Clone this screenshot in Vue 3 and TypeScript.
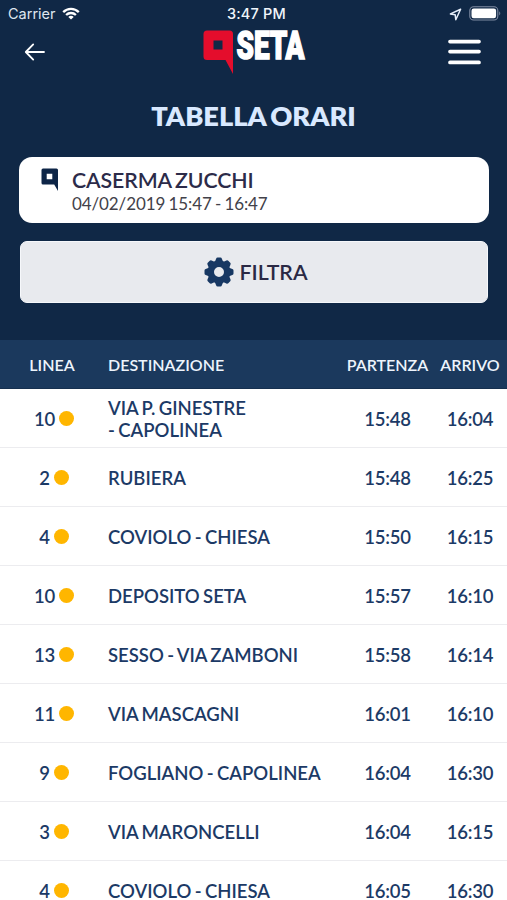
<script setup lang="ts">
interface Departure {
  line: number
  destination: string[]
  departure: string
  arrival: string
}

const departures: Departure[] = [
  { line: 10, destination: ['VIA P. GINESTRE', '- CAPOLINEA'], departure: '15:48', arrival: '16:04' },
  { line: 2, destination: ['RUBIERA'], departure: '15:48', arrival: '16:25' },
  { line: 4, destination: ['COVIOLO - CHIESA'], departure: '15:50', arrival: '16:15' },
  { line: 10, destination: ['DEPOSITO SETA'], departure: '15:57', arrival: '16:10' },
  { line: 13, destination: ['SESSO - VIA ZAMBONI'], departure: '15:58', arrival: '16:14' },
  { line: 11, destination: ['VIA MASCAGNI'], departure: '16:01', arrival: '16:10' },
  { line: 9, destination: ['FOGLIANO - CAPOLINEA'], departure: '16:04', arrival: '16:30' },
  { line: 3, destination: ['VIA MARONCELLI'], departure: '16:04', arrival: '16:15' },
  { line: 4, destination: ['COVIOLO - CHIESA'], departure: '16:05', arrival: '16:30' },
]

const teeth = [0, 45, 90, 135, 180, 225, 270, 315]
</script>

<template>
  <div class="screen">
    <div class="status">
      <div class="carrier">
        <span>Carrier</span>
        <svg width="18" height="13" viewBox="0 0 18 13" fill="none" stroke="#fff" stroke-width="2.3">
          <path d="M1.2 5.1C5.6.7 12.4.7 16.8 5.1" />
          <path d="M4.1 8c2.8-2.7 7-2.7 9.8 0" />
          <path d="M9 12.6 6.3 9.9c1.5-1.4 3.9-1.4 5.4 0z" fill="#fff" stroke="none" />
        </svg>
      </div>
      <span class="clock">3:47 PM</span>
      <div class="indicators">
        <svg width="13" height="13" viewBox="0 0 13 13" fill="none" stroke="#e6eefa" stroke-width="1.5" stroke-linejoin="round">
          <path d="M11.6 1.3 1.4 5.9l4.8.9 .6 4.9z" />
        </svg>
        <svg class="battery" width="33" height="15" viewBox="0 0 33 15">
          <rect x=".8" y=".8" width="28" height="13.2" rx="3.8" fill="none" stroke="#7f8ba2" stroke-width="1.1" />
          <rect x="2.5" y="2.5" width="24.6" height="9.8" rx="2.2" fill="#fff" />
          <path d="M30.3 5.3q1.9 2.1 0 4.2z" fill="#8591a7" />
        </svg>
      </div>
    </div>

    <nav class="nav">
      <svg class="back" width="22" height="18" viewBox="0 0 22 18" fill="none" stroke="#fff" stroke-width="1.8" stroke-linecap="round" stroke-linejoin="round">
        <path d="M20 9H2M9.2 1.4 1.8 9l7.4 7.600" />
      </svg>
      <svg class="logo" width="104" height="46" viewBox="0 0 104 46">
        <path fill="#e40d2c" fill-rule="evenodd" d="M4 1.500H26.500Q30 1.500 30 5V45L22.500 31H4Q.5 31 .5 27.500V5Q.5 1.500 4 1.500zM10.500 11.500V20.500H19.500V11.500z" />
        <text x="33.500" y="30" textLength="68" lengthAdjust="spacingAndGlyphs">SETA</text>
      </svg>
      <svg class="menu" width="33" height="26" viewBox="0 0 33 26" stroke="#fff" stroke-width="3.7" stroke-linecap="round">
        <path d="M2 2.600H31M2 12.600H31M2 23.400H31" />
      </svg>
    </nav>

    <h1 class="title">TABELLA ORARI</h1>

    <section class="stop">
      <svg width="18" height="24" viewBox="0 0 18 24">
        <path fill="#0d2547" fill-rule="evenodd" d="M2 .500H15.500Q17 .500 17 2V23L13.200 16.500H2Q.5 16.500 .5 15V2Q.5 .500 2 .500zM5.700 5.700V11.300H11.300V5.700z" />
      </svg>
      <div>
        <div class="stop-name">CASERMA ZUCCHI</div>
        <div class="stop-time">04/02/2019 15:47 - 16:47</div>
      </div>
    </section>

    <button class="filter" type="button">
      <svg width="30" height="30" viewBox="-15 -15 30 30" fill="#173863">
        <path v-for="angle in teeth" :key="angle" d="M-4.400-9.500 -2.900-13.300Q-2.500-14.500-1.400-14.500H1.400Q2.500-14.500 2.900-13.300L4.400-9.500z" :transform="`rotate(${angle})`" />
        <circle r="8.200" fill="none" stroke="#173863" stroke-width="6.400" />
      </svg>
      <span>FILTRA</span>
    </button>

    <div class="row head">
      <span class="line">LINEA</span>
      <span>DESTINAZIONE</span>
      <span class="heading">PARTENZA</span>
      <span class="heading">ARRIVO</span>
    </div>
    <div v-for="(item, index) in departures" :key="index" class="row">
      <span class="line">{{ item.line }}<i class="dot"></i></span>
      <span class="destination">
        <span v-for="part in item.destination" :key="part">{{ part }}</span>
      </span>
      <span class="time">{{ item.departure }}</span>
      <span class="time">{{ item.arrival }}</span>
    </div>
  </div>
</template>

<style>
body {
  margin: 0;
  background: #fff;
}
</style>

<style scoped>
.screen {
  width: 507px;
  height: 900px;
  overflow: hidden;
  display: flex;
  flex-direction: column;
  background: linear-gradient(#102846 340px, #fff 340px);
  font-family: Lato, sans-serif;
}
.screen svg {
  display: block;
  flex: none;
}
.status {
  flex: none;
  height: 28px;
  box-sizing: border-box;
  padding: 0 5px 0 8px;
  display: grid;
  grid-template-columns: 1fr auto 1fr;
  align-items: center;
  font: 400 14.5px/28px Inter, sans-serif;
  color: #dfe6ef;
}
.carrier,
.indicators {
  display: flex;
  align-items: center;
  gap: 6px;
}
.indicators {
  justify-content: flex-end;
}
.indicators svg:first-child {
  margin-right: 1px;
}
.battery {
  margin-top: -2px;
}
.carrier svg {
  margin-top: -2px;
}
.clock {
  padding-left: 3px;
  font-weight: 500;
  letter-spacing: 0.2px;
  color: #f0f5fb;
}
.nav {
  flex: none;
  height: 54px;
  padding-left: 2px;
  display: grid;
  grid-template-columns: 1fr 104px 1fr;
  align-items: start;
}
.back {
  margin: 15px 0 0 22px;
}
.logo {
  margin-top: 1px;
  overflow: visible;
}
.logo text {
  font: 900 38.5px Roboto, sans-serif;
  fill: #fff;
  stroke: #fff;
  stroke-width: 1.6px;
}
.menu {
  justify-self: end;
  margin: 11px 26px 0 0;
}
.title {
  flex: none;
  margin: 14px 0 0;
  text-align: center;
  font-size: 27.2px;
  line-height: 40px;
  font-weight: 800;
  word-spacing: -2px;
  color: #d9e9ff;
}
.stop {
  flex: none;
  margin: 21px 18px 0 19px;
  height: 66px;
  box-sizing: border-box;
  padding: 11px 22px 0;
  display: flex;
  gap: 13px;
  background: #fff;
  border-radius: 13px;
}
.stop-name {
  font-size: 21.3px;
  line-height: 25px;
  font-weight: 600;
  letter-spacing: -0.1px;
  word-spacing: -1.5px;
  color: #2c2b49;
}
.stop-time {
  font-size: 17px;
  line-height: 21px;
  letter-spacing: -0.1px;
  word-spacing: -1px;
  color: #424149;
}
.filter {
  flex: none;
  margin: 18px 19px 0 20px;
  height: 62px;
  padding: 0 0 0 4px;
  display: flex;
  align-items: center;
  justify-content: center;
  gap: 5px;
  border: 1px solid #f6f8fb;
  border-radius: 7px;
  background: #e8eaee;
  font: 600 21.3px Lato, sans-serif;
  color: #2a2944;
}
.row {
  flex: none;
  height: 59px;
  box-sizing: border-box;
  padding-top: 1px;
  border-bottom: 1px solid #ececef;
  display: grid;
  grid-template-columns: 108px 1fr 91px 74px;
  align-items: center;
  background: #fff;
  font-size: 18.5px;
  line-height: 22px;
  font-weight: 600;
  word-spacing: -1.2px;
  color: #1c3a66;
}
.head {
  margin-top: 37px;
  height: 49px;
  padding-top: 2px;
  border-bottom: 1px solid #16304f;
  background: #1b395d;
  font-size: 16px;
  color: #edf4fc;
}
.line {
  display: flex;
  align-items: center;
  justify-content: center;
  gap: 4px;
  letter-spacing: -0.2px;
}
.head .line {
  padding-right: 4px;
  letter-spacing: 0;
}
.dot {
  width: 15px;
  height: 15px;
  border-radius: 50%;
  background: #ffb600;
}
.destination {
  display: flex;
  flex-direction: column;
}
.time,
.heading {
  justify-self: center;
}
.time {
  letter-spacing: -0.2px;
}
</style>
